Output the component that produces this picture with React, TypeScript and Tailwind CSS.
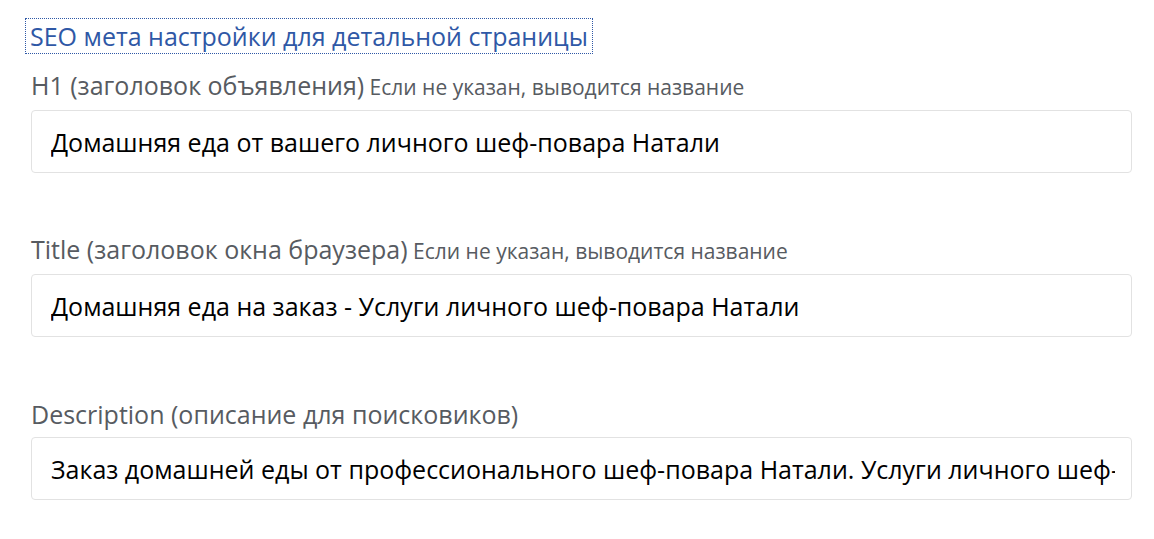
const fields = [
  {
    label: "H1 (заголовок объявления)",
    hint: "Если не указан, выводится название",
    value: "Домашняя еда от вашего личного шеф-повара Натали",
  },
  {
    label: "Title (заголовок окна браузера)",
    hint: "Если не указан, выводится название",
    value: "Домашняя еда на заказ - Услуги личного шеф-повара Натали",
  },
  {
    label: "Description (описание для поисковиков)",
    hint: "",
    value:
      "Заказ домашней еды от профессионального шеф-повара Натали. Услуги личного шеф-повара для вашего дома",
  },
];

const gaps = ["mt-[18px]", "mt-[62px]", "mt-[63px]"];

export default function App() {
  return (
    <div className="min-h-screen bg-white pl-[31px] pt-[19px] font-['Open_Sans',sans-serif]">
      <div className="w-[1101px]">
        <a
          href="#"
          className="-ml-[5px] inline-block h-[34px] px-[4px] text-[25px] leading-[34px] text-[#2f58a6] outline-1 outline-dotted outline-[#2f58a6]"
        >
          SEO мета настройки для детальной страницы
        </a>
        {fields.map((f, i) => (
          <div key={i} className={gaps[i]}>
            <label className="block text-[25px] leading-[28px] text-[#575b61]">
              {f.label}
              {f.hint && <span className="text-[21px]"> {f.hint}</span>}
            </label>
            <input
              readOnly
              value={f.value}
              className="mt-[9px] block h-[63px] w-full rounded-[4px] border border-[#e2e2e2] bg-white pl-[19px] pr-[16px] text-[25px] text-black outline-none"
            />
          </div>
        ))}
      </div>
    </div>
  );
}
